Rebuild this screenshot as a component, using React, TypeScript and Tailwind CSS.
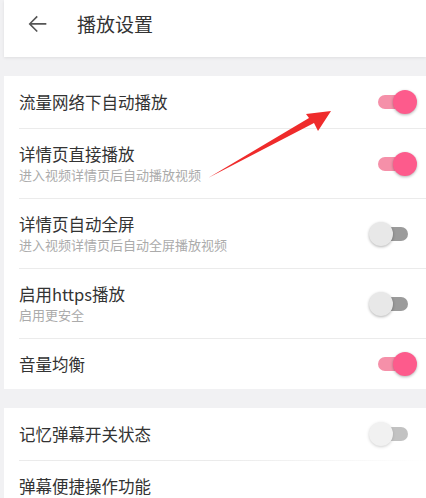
import React from "react";

type Row = { title: string; sub?: string; on?: boolean };

const groupOne: Row[] = [
  { title: "流量网络下自动播放", on: true },
  { title: "详情页直接播放", sub: "进入视频详情页后自动播放视频", on: true },
  { title: "详情页自动全屏", sub: "进入视频详情页后自动全屏播放视频", on: false },
  { title: "启用https播放", sub: "启用更安全", on: false },
  { title: "音量均衡", on: true },
];

const groupTwo: Row[] = [
  { title: "记忆弹幕开关状态", on: false },
  { title: "弹幕便捷操作功能" },
];

function Toggle({ on }: { on: boolean }) {
  return (
    <div className="relative w-[48px] h-[24px] shrink-0 mr-[9px]">
      <div
        className={
          on
            ? "absolute left-[9px] top-[5px] w-[32px] h-[14px] rounded-full bg-[#f590a9]"
            : "absolute left-[7px] top-[5px] w-[32px] h-[14px] rounded-full bg-[#9b9b9b]"
        }
      />
      <div
        className={
          on
            ? "absolute right-0 top-0 w-[24px] h-[24px] rounded-full bg-[#fd5b8c] shadow-[0_1px_3px_rgba(0,0,0,0.3)]"
            : "absolute left-0 top-0 w-[24px] h-[24px] rounded-full bg-[#e8e8e8] shadow-[0_1px_3px_rgba(0,0,0,0.3)]"
        }
      />
    </div>
  );
}

function SettingRow({ row, last, fade }: { row: Row; last: boolean; fade?: boolean }) {
  const height = row.sub ? "h-[69px]" : last ? "h-[50px]" : "h-[52px]";
  return (
    <div className="pl-[15px]">
      <div className={`flex items-center justify-between ${height}`}>
        <div className="flex flex-col">
          <span className="text-[16.5px] leading-[22px] text-[#333333]">{row.title}</span>
          {row.sub && (
            <span className="mt-[1px] text-[13px] leading-[18px] text-[#ababab]">{row.sub}</span>
          )}
        </div>
        {row.on !== undefined && (
          <div className={fade ? "opacity-60" : ""}>
            <Toggle on={row.on} />
          </div>
        )}
      </div>
      {!last && (
        <div
          className={
            fade
              ? "h-px bg-linear-to-r from-[#ebebeb] via-[#ebebeb] to-transparent"
              : "h-px bg-[#ebebeb]"
          }
        />
      )}
    </div>
  );
}

export default function App() {
  return (
    <div
      className="relative w-[426px] h-[498px] overflow-hidden bg-[#f1f1f3] pl-[4px]"
      style={{ fontFamily: '"Noto Sans CJK SC", "Noto Sans", sans-serif' }}
    >
      {/* HEADER */}
      <div className="relative z-10 h-[57px] bg-white flex items-start pt-[11px] shadow-[0_1px_3px_rgba(0,0,0,0.08)]">
        <svg
          className="ml-[19px] w-[28px] h-[28px] mt-[-1px]"
          viewBox="0 0 24 24"
          fill="#555555"
        >
          <path d="M20 11.2H7.4l5.3-5.3-1-1L4.8 12l6.9 6.9 1-1-5.3-5.3H20v-1.4z" />
        </svg>
        <span className="ml-[26px] text-[19px] leading-[26px] text-[#333333]">播放设置</span>
      </div>

      {/* GROUP ONE */}
      <div className="mt-[19px] bg-white">
        {groupOne.map((r, i) => (
          <SettingRow key={r.title} row={r} last={i === groupOne.length - 1} />
        ))}
      </div>

      {/* GROUP TWO */}
      <div className="mt-[19px] bg-white">
        {groupTwo.map((r, i) => (
          <SettingRow key={r.title} row={r} last={i === groupTwo.length - 1} fade />
        ))}
      </div>

      {/* RED ARROW */}
      <svg className="absolute left-0 top-0 w-[426px] h-[498px] pointer-events-none" viewBox="0 0 426 498">
        <polygon
          points="208,178 309,118 306,114 331,111 318,131 314,123"
          fill="#ef2b2b"
        />
      </svg>
    </div>
  );
}
